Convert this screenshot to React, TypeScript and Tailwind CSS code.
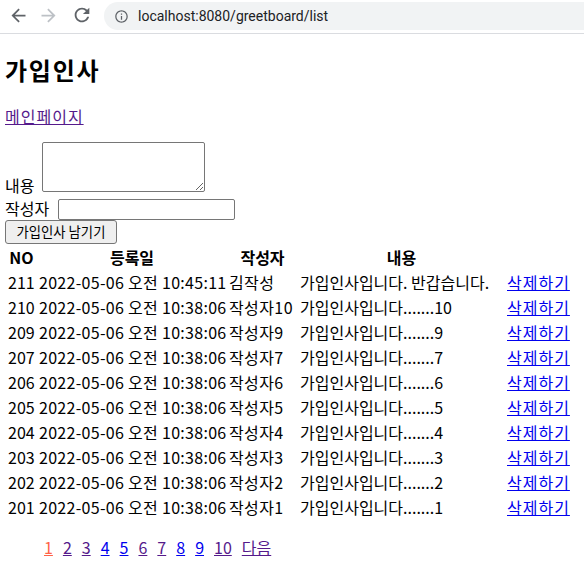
import React from 'react';

type Greet = { no: number; date: string; writer: string; content: string };

const rows: Greet[] = [
  { no: 211, date: '2022-05-06 오전 10:45:11', writer: '김작성', content: '가입인사입니다. 반갑습니다.' },
  ...[10, 9, 7, 6, 5, 4, 3, 2, 1].map((n) => ({
    no: 200 + n,
    date: '2022-05-06 오전 10:38:06',
    writer: `작성자${n}`,
    content: `가입인사입니다.......${n}`,
  })),
];

// visited links are purple, fresh ones blue, current page orange
const pages: { label: string; color: string }[] = [
  { label: '1', color: 'text-[#ff6347]' },
  { label: '2', color: 'text-[#551a8b]' },
  { label: '3', color: 'text-[#551a8b]' },
  { label: '4', color: 'text-[#0000ee]' },
  { label: '5', color: 'text-[#0000ee]' },
  { label: '6', color: 'text-[#551a8b]' },
  { label: '7', color: 'text-[#551a8b]' },
  { label: '8', color: 'text-[#0000ee]' },
  { label: '9', color: 'text-[#0000ee]' },
  { label: '10', color: 'text-[#551a8b]' },
  { label: '다음', color: 'text-[#551a8b]' },
];

const BrowserBar = () => (
  <div className="flex h-[34px] items-start border-b border-[#dadce0] bg-white">
    <div className="ml-[2px] flex h-[30px] w-[32px] items-center justify-center">
      <svg width="21" height="21" viewBox="0 0 24 24" fill="#5f6368">
        <path d="M20 11H7.83l5.59-5.59L12 4l-8 8 8 8 1.41-1.41L7.83 13H20v-2z" />
      </svg>
    </div>
    <div className="flex h-[30px] w-[28px] items-center justify-center">
      <svg width="21" height="21" viewBox="0 0 24 24" fill="#bdc1c6">
        <path d="M12 4l-1.41 1.41L16.17 11H4v2h12.17l-5.58 5.59L12 20l8-8z" />
      </svg>
    </div>
    <div className="flex h-[30px] w-[40px] items-center justify-center">
      <svg width="22" height="22" viewBox="0 0 24 24" fill="#5f6368">
        <path d="M17.65 6.35A7.958 7.958 0 0 0 12 4c-4.42 0-7.99 3.58-7.99 8s3.57 8 7.99 8c3.730 0 6.84-2.55 7.73-6h-2.08A5.99 5.99 0 0 1 12 18c-3.31 0-6-2.69-6-6s2.69-6 6-6c1.66 0 3.14.69 4.22 1.78L13 11h7V4l-2.35 2.35z" />
      </svg>
    </div>
    <div className="mt-[2px] ml-[2px] flex h-[28px] flex-1 items-center rounded-l-full bg-[#f1f3f4] pl-[10px]">
      <svg width="15" height="15" viewBox="0 0 24 24" fill="#5f6368">
        <path d="M11 7h2v2h-2zm0 4h2v6h-2zm1-9C6.48 2 2 6.480 2 12s4.48 10 10 10 10-4.48 10-10S17.52 2 12 2zm0 18c-4.41 0-8-3.59-8-8s3.59-8 8-8 8 3.59 8 8-3.59 8-8 8z" />
      </svg>
      <span className="ml-[9px] font-['Roboto',sans-serif] text-[14px] text-[#202124]">
        localhost:8080/greetboard/list
      </span>
    </div>
  </div>
);

export default function App() {
  return (
    <div className="min-h-screen bg-white font-['Noto_Sans_CJK_KR','Noto_Sans',sans-serif] text-[16px] leading-[21px] text-black">
      <BrowserBar />

      <main className="pl-[5px]">
        <h2 className="mt-[20px] text-[24px] leading-[32px] font-bold tracking-[1.75px]">가입인사</h2>

        <a href="#" className="mt-[20px] block w-fit tracking-[1px] text-[#551a8b] underline">
          메인페이지
        </a>

        <form className="mt-[15px]" onSubmit={(e) => e.preventDefault()}>
          <div className="flex h-[54px] items-end">
            <label className="w-[37px]">내용</label>
            <textarea className="mb-[4px] h-[50px] w-[163px] resize rounded-[2px] border border-[#767676] bg-white" />
          </div>
          <div className="flex h-[24px] items-center">
            <label className="w-[53px]">작성자</label>
            <input
              type="text"
              className="h-[21px] w-[177px] self-end rounded-[2px] border border-[#767676] bg-white"
            />
          </div>
          <button
            type="submit"
            className="h-[24px] w-[112px] rounded-[3px] border border-[#767676] bg-[#efefef] text-[13.33px] leading-[18px]"
          >
            가입인사 남기기
          </button>
        </form>

        <table className="w-[568px] table-fixed border-separate border-spacing-[2px]">
          <thead>
            <tr>
              <th className="w-[29px] p-[1px] whitespace-nowrap">NO</th>
              <th className="w-[188px] p-[1px] whitespace-nowrap">등록일</th>
              <th className="w-[69px] p-[1px] whitespace-nowrap">작성자</th>
              <th className="w-[205px] p-[1px] whitespace-nowrap">내용</th>
              <th className="w-[65px] p-[1px]"></th>
            </tr>
          </thead>
          <tbody>
            {rows.map((r) => (
              <tr key={r.no}>
                <td className="p-[1px] whitespace-nowrap">{r.no}</td>
                <td className="p-[1px] tracking-[0.3px] whitespace-nowrap">{r.date}</td>
                <td className="p-[1px] tracking-[0.4px] whitespace-nowrap">{r.writer}</td>
                <td className="p-[1px] whitespace-nowrap">{r.content}</td>
                <td className="p-[1px] whitespace-nowrap">
                  <a href="#" className="tracking-[1px] text-[#0000ee] underline">
                    삭제하기
                  </a>
                </td>
              </tr>
            ))}
          </tbody>
        </table>

        <div className="mt-[16px] flex gap-[10px] pl-[39px]">
          {pages.map((p) => (
            <a key={p.label} href="#" className={`${p.color} underline`}>
              {p.label}
            </a>
          ))}
        </div>
      </main>
    </div>
  );
}
